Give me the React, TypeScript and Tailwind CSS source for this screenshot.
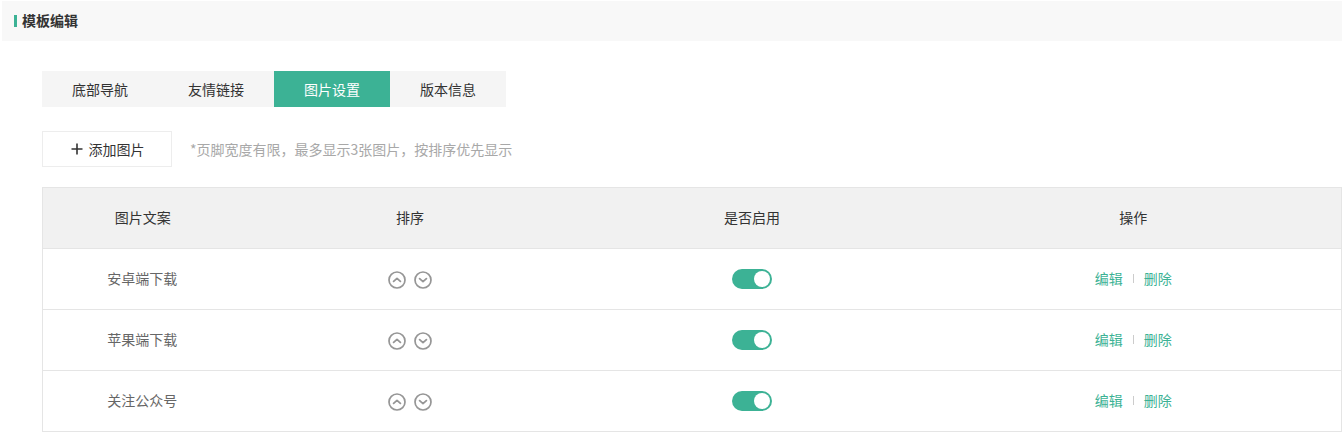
const tabs = ["底部导航", "友情链接", "图片设置", "版本信息"];
const rows = ["安卓端下载", "苹果端下载", "关注公众号"];

function CircleArrow({ up }: { up?: boolean }) {
  return (
    <svg width="18" height="18" viewBox="0 0 18 18" fill="none" stroke="#969696" className="block">
      <circle cx="9" cy="9" r="8" strokeWidth="1.7" />
      <path
        d={up ? "M5.6 10.4 9 7.4l3.4 3" : "M5.6 7.6 9 10.6l3.4-3"}
        strokeWidth="1.8"
        strokeLinecap="round"
        strokeLinejoin="round"
      />
    </svg>
  );
}

function Toggle() {
  return (
    <div className="flex h-5 w-10 items-center justify-end rounded-full bg-[#3cb295] pr-[2px]">
      <div className="h-4 w-4 rounded-full bg-white" />
    </div>
  );
}

export default function App() {
  return (
    <div
      className="h-[436px] w-[1342px] overflow-hidden bg-white pl-[2px] pt-[1px] text-sm text-[#333333]"
      style={{ fontFamily: '"Noto Sans CJK SC", sans-serif' }}
    >
      <div className="flex h-10 items-center bg-[#f8f8f8] pl-3">
        <span className="mr-[5px] h-3 w-[3px] bg-[#3cb295]" />
        <span className="pb-[2px] font-bold">模板编辑</span>
      </div>

      <div className="pl-10 pt-[30px]">
        <div className="flex h-9 w-[464px] bg-[#f5f5f5]">
          {tabs.map((tab, i) => (
            <div
              key={tab}
              className={`flex w-[116px] items-center justify-center ${
                i === 2 ? "bg-[#3cb295] text-white" : ""
              }`}
            >
              {tab}
            </div>
          ))}
        </div>

        <div className="mt-6 flex items-center">
          <button
            type="button"
            className="flex h-9 w-[130px] items-center justify-center gap-[6px] border border-[#ededed] bg-white pl-[1px]"
          >
            <svg width="12" height="12" viewBox="0 0 12 12" stroke="#333333" strokeWidth="1.6" className="block">
              <path d="M6 .5v11M.5 6h11" />
            </svg>
            添加图片
          </button>
          <span className="ml-[18px] text-[#a8a8a8]">*页脚宽度有限，最多显示3张图片，按排序优先显示</span>
        </div>

        <table className="mt-5 w-[1300px] table-fixed border-collapse border border-[#e5e5e5]">
          <colgroup>
            <col className="w-[199px]" />
            <col className="w-[336px]" />
            <col className="w-[348px]" />
            <col />
          </colgroup>
          <thead>
            <tr className="h-[61px] bg-[#f1f1f1]">
              <th className="pb-[2px] pl-px font-normal">图片文案</th>
              <th className="pb-[2px] pl-px font-normal">排序</th>
              <th className="pb-[2px] pl-px font-normal">是否启用</th>
              <th className="pb-[2px] font-normal">操作</th>
            </tr>
          </thead>
          <tbody>
            {rows.map((name) => (
              <tr key={name} className="h-[61px] border-t border-[#e5e5e5]">
                <td className="pb-[2px] text-center text-[#666666]">{name}</td>
                <td>
                  <div className="flex translate-y-[1px] justify-center gap-2">
                    <CircleArrow up />
                    <CircleArrow />
                  </div>
                </td>
                <td>
                  <div className="flex justify-center">
                    <Toggle />
                  </div>
                </td>
                <td className="pb-[2px]">
                  <div className="flex items-center justify-center text-[#3cb295]">
                    <span>编辑</span>
                    <span className="mx-[10px] h-[9px] w-px bg-[#cccccc]" />
                    <span>删除</span>
                  </div>
                </td>
              </tr>
            ))}
          </tbody>
        </table>
      </div>
    </div>
  );
}
